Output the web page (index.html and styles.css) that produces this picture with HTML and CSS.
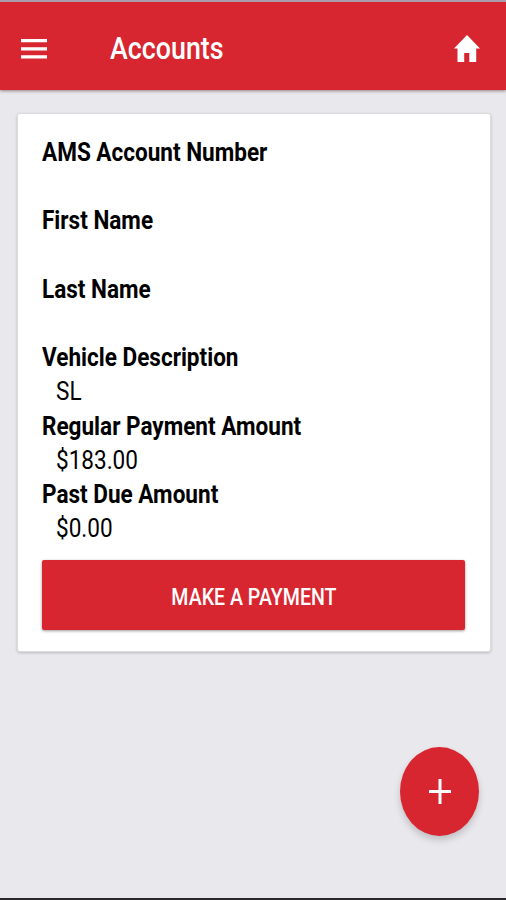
FILE: index.html
```html
<!DOCTYPE html>
<html lang="en">
<head>
<meta charset="utf-8">
<title>Accounts</title>
<link rel="stylesheet" href="styles.css">
</head>
<body>
<header class="toolbar">
  <svg class="menu-icon" width="26" height="20" viewBox="0 0 26 20"><path d="M0 0h26v3.2H0zM0 8.2h26v3.2H0zM0 16.2h26v3.2H0z"/></svg>
  <h1 class="title">Accounts</h1>
  <svg class="home-icon" width="26" height="28" viewBox="0 0 26 28"><path d="M13 0 0 13.5h3.5V27h6.7v-9h5.1v9h6.9V13.5H26z"/></svg>
</header>
<main class="card">
  <dl class="details">
    <dt>AMS Account Number</dt><dd></dd>
    <dt>First Name</dt><dd></dd>
    <dt>Last Name</dt><dd></dd>
    <dt>Vehicle Description</dt><dd>SL</dd>
    <dt>Regular Payment Amount</dt><dd>$183.00</dd>
    <dt>Past Due Amount</dt><dd>$0.00</dd>
  </dl>
  <button class="pay"><span class="pay-label">MAKE A PAYMENT</span></button>
</main>
<button class="fab" aria-label="Add"><svg width="22" height="25" viewBox="0 0 22 25"><path d="M9.5 0h3v11h9.5v3h-9.5v11h-3V14H0v-3h9.5z"/></svg></button>
</body>
</html>
```
FILE: styles.css
```css
* { box-sizing: border-box; }
body {
  margin: 0;
  height: 900px;
  overflow: hidden;
  background: #e8e8ed;
  border-top: 2px solid #a99cad;
  border-bottom: 2px solid #29272b;
  font-family: Roboto, sans-serif;
  color: #000;
}
svg { display: block; fill: #fff; }
.toolbar {
  display: flex;
  align-items: center;
  height: 88px;
  padding: 5px 26px 0 21px;
  background: #d82630;
  box-shadow: 0 1px 3px rgba(80, 40, 50, .55);
}
.title {
  margin: 0 auto 0 63px;
  color: #fff;
  font-size: 31px;
  font-weight: 500;
  line-height: 36px;
  transform: scaleX(.865);
  transform-origin: left;
}
.card {
  width: 472px;
  height: 537px;
  margin: 24px 0 0 18px;
  padding: 21px 24px 0;
  background: #fff;
  border-radius: 2px;
  box-shadow: 0 0 0 1px #dcdce0, 0 1px 3px 1px rgba(0, 0, 0, .2);
}
.details { margin: 0; font-size: 25.5px; line-height: 34.2px; }
.details dt, .details dd {
  height: 34.2px;
  white-space: nowrap;
  transform: scaleX(.884);
  transform-origin: left;
}
.details dt { font-weight: 700; }
.details dd { margin: 0 0 0 14px; }
.pay, .fab {
  display: flex;
  align-items: center;
  justify-content: center;
  padding: 0;
  border: 0;
  background: #d82630;
  color: #fff;
}
.pay {
  width: 423px;
  height: 70px;
  margin-top: 15px;
  padding-top: 5px;
  border-radius: 2px;
  box-shadow: 0 1px 3px rgba(0, 0, 0, .4);
  font: 500 23px/28px Roboto, sans-serif;
}
.pay-label { white-space: nowrap; transform: scaleX(.852); }
.fab {
  position: absolute;
  left: 400px;
  top: 747px;
  width: 79px;
  height: 89px;
  border-radius: 50%;
  box-shadow: 0 4px 7px rgba(0, 0, 0, .18);
}
```
